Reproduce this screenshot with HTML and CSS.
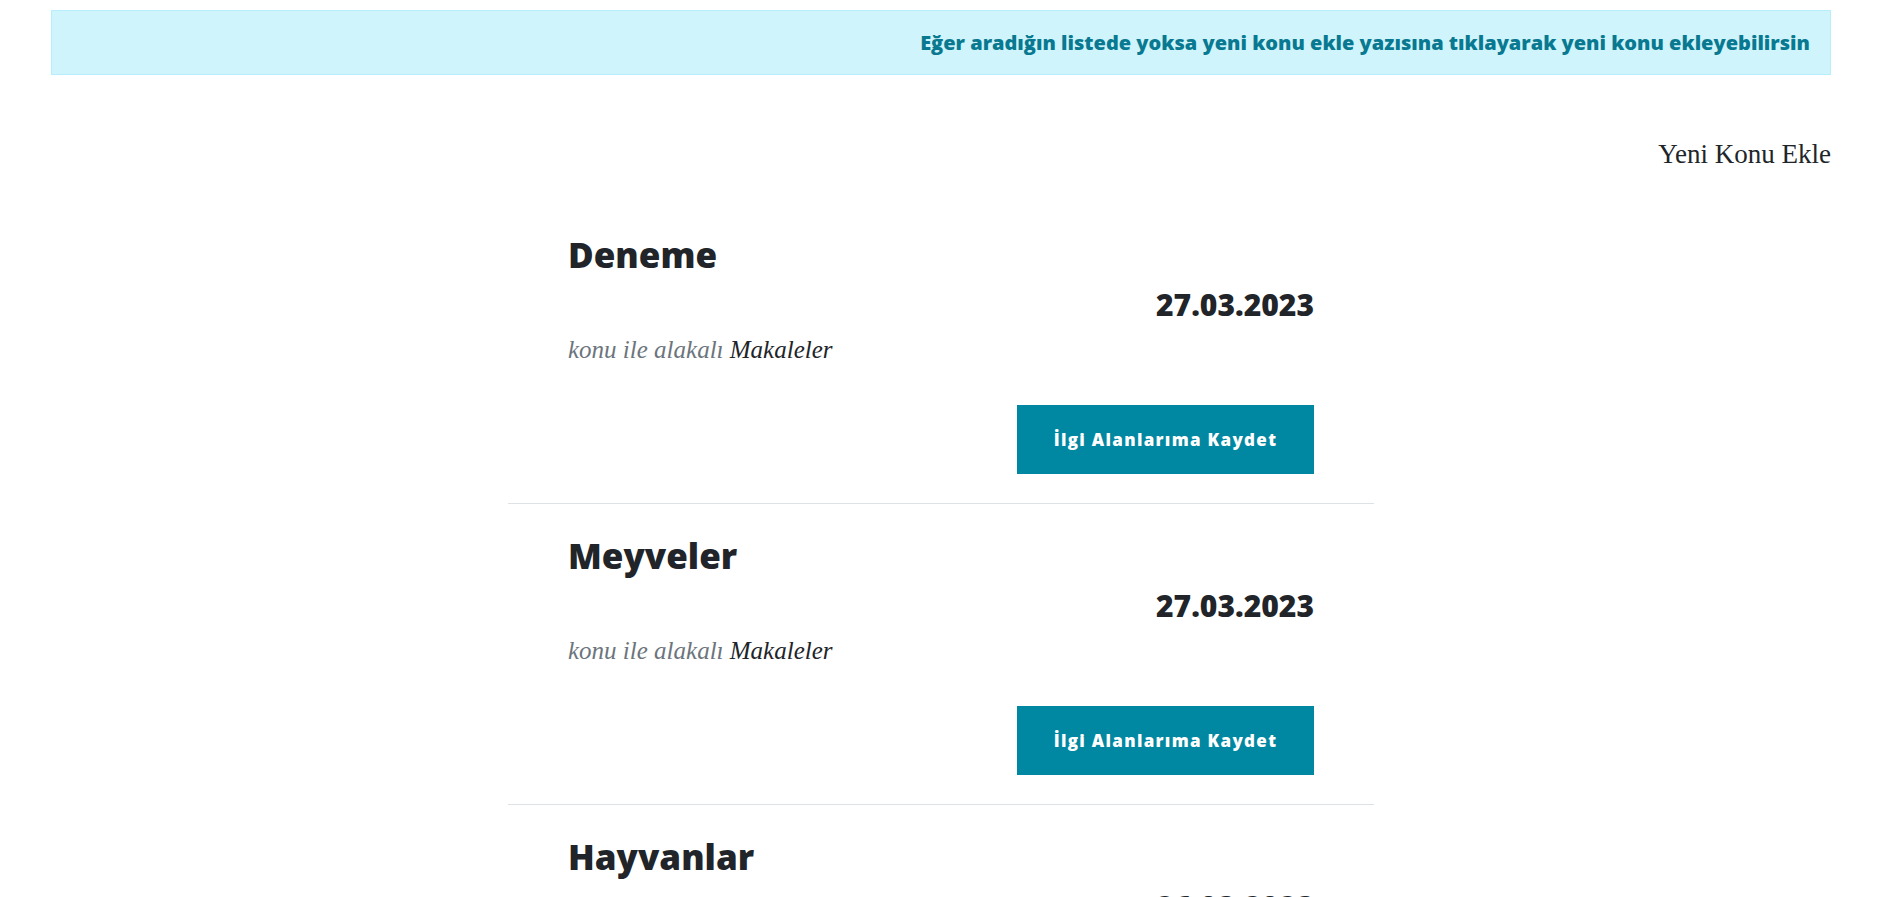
FILE: index.html
```html
<!DOCTYPE html>
<html lang="tr">
<head>
<meta charset="utf-8">
<title>Konular</title>
<link rel="stylesheet" href="styles.css">
</head>
<body>
<div class="page">
  <div class="alert">Eğer aradığın listede yoksa yeni konu ekle yazısına tıklayarak yeni konu ekleyebilirsin</div>
  <div class="actions"><a class="add-link" href="#">Yeni Konu Ekle</a></div>
  <div class="topics">
    <article class="topic">
      <h2 class="topic-title">Deneme</h2>
      <div class="topic-date">27.03.2023</div>
      <p class="topic-meta"><span class="muted">konu ile alakalı</span> Makaleler</p>
      <div class="topic-actions"><button class="btn-save" type="button">İlgi Alanlarıma Kaydet</button></div>
    </article>
    <article class="topic">
      <h2 class="topic-title">Meyveler</h2>
      <div class="topic-date">27.03.2023</div>
      <p class="topic-meta"><span class="muted">konu ile alakalı</span> Makaleler</p>
      <div class="topic-actions"><button class="btn-save" type="button">İlgi Alanlarıma Kaydet</button></div>
    </article>
    <article class="topic">
      <h2 class="topic-title">Hayvanlar</h2>
      <div class="topic-date">26.03.2023</div>
      <p class="topic-meta"><span class="muted">konu ile alakalı</span> Makaleler</p>
      <div class="topic-actions"><button class="btn-save" type="button">İlgi Alanlarıma Kaydet</button></div>
    </article>
  </div>
</div>
</body>
</html>
```
FILE: styles.css
```css
* { box-sizing: border-box; }
body {
  margin: 0;
  background: #fff;
  color: #212529;
  font-family: "Open Sans", "Liberation Sans", sans-serif;
}
.page {
  padding: 10px 49px 0 51px;
}
.alert {
  display: flex;
  justify-content: flex-end;
  align-items: center;
  height: 65px;
  padding: 0 20px;
  background: #cff4fc;
  border: 1px solid #b6effb;
  color: #087990;
  font-weight: 800;
  font-size: 20px;
}
.actions {
  margin-top: 60px;
  text-align: right;
  font-family: "Liberation Serif", serif;
  font-size: 27px;
  line-height: 39px;
}
.add-link {
  color: #212529;
  text-decoration: none;
}
.topics {
  width: 866px;
  margin: 29px auto 0;
}
.topic {
  padding: 31px 60px 29px;
  border-bottom: 1px solid #dee2e6;
}
.topic-title {
  margin: 0;
  font-size: 35px;
  line-height: 42px;
  font-weight: 800;
  color: #212529;
}
.topic-date {
  margin-top: 11px;
  text-align: right;
  font-size: 30px;
  line-height: 36px;
  font-weight: 800;
}
.topic-meta {
  margin: 8px 0 0;
  font-family: "Liberation Serif", serif;
  font-style: italic;
  font-size: 25px;
  line-height: 38px;
  color: #212529;
}
.muted { color: #6c757d; }
.topic-actions {
  margin-top: 36px;
  display: flex;
  justify-content: flex-end;
}
.btn-save {
  width: 297px;
  height: 69px;
  border: 0;
  background: #0087a1;
  color: #fff;
  font-family: "Open Sans", sans-serif;
  font-weight: 800;
  font-size: 17px;
  letter-spacing: 1.3px;
  cursor: pointer;
}
```
